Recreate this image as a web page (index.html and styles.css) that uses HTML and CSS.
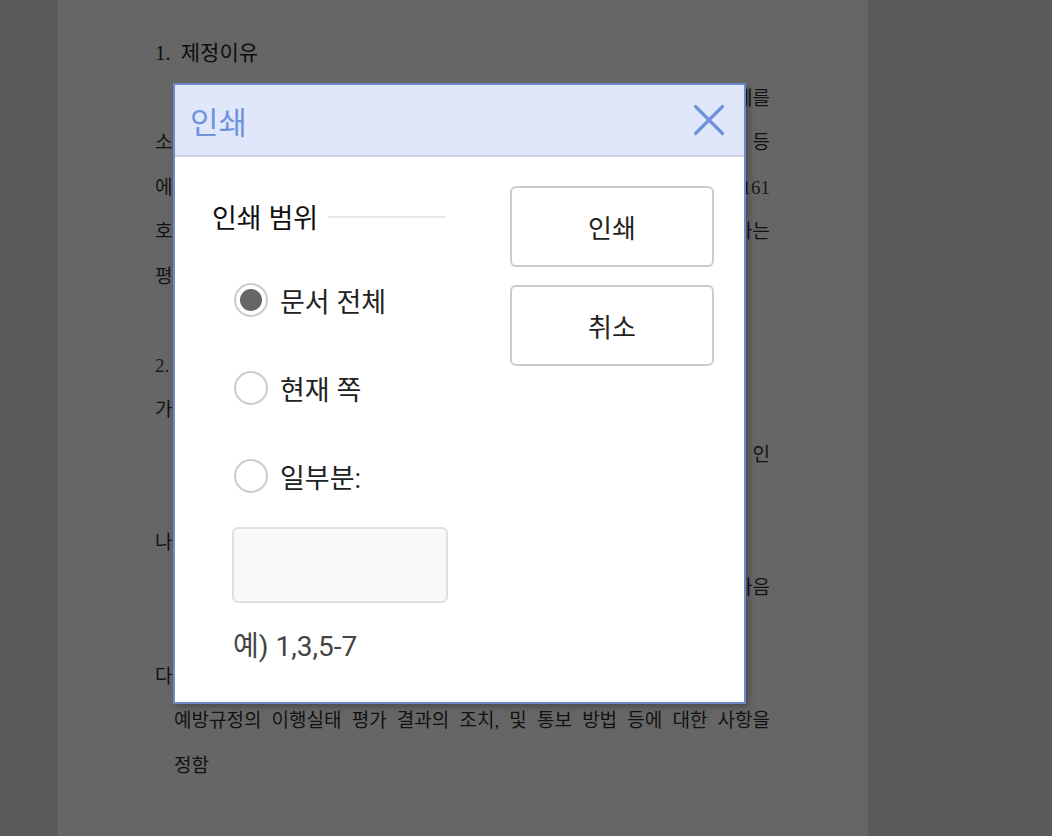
FILE: index.html
```html
<!DOCTYPE html>
<html lang="ko">
<head>
<meta charset="utf-8">
<title>인쇄</title>
<link rel="stylesheet" href="styles.css">
</head>
<body>
<div class="desk">
  <div class="page">
    <div class="heading"><span class="hnum">1.</span>제정이유</div>
    <div class="line"><span></span><span>체를</span></div>
    <div class="line"><span>소</span><span>등</span></div>
    <div class="line"><span>에</span><span class="num">161</span></div>
    <div class="line"><span>호.</span><span>하는</span></div>
    <div class="line"><span>평</span></div>
    <div class="line"></div>
    <div class="line"><span class="num">2.</span></div>
    <div class="line"><span>가</span></div>
    <div class="line"><span></span><span>인</span></div>
    <div class="line"></div>
    <div class="line"><span>나</span></div>
    <div class="line"><span></span><span>다음</span></div>
    <div class="line"></div>
    <div class="line"><span>다</span></div>
    <p class="para">예방규정의 이행실태 평가 결과의 조치, 및 통보 방법 등에 대한 사항을</p>
    <p class="para last">정함</p>
  </div>

  <div class="dialog">
    <div class="dialog-header">
      <span class="dialog-title">인쇄</span>
      <button class="close" aria-label="닫기">
        <svg width="32" height="32" viewBox="0 0 32 32"><path d="M2.5 2.5 L29.5 29.5 M29.5 2.5 L2.5 29.5" stroke="#7092dc" stroke-width="3.2" stroke-linecap="round" fill="none"/></svg>
      </button>
    </div>
    <div class="dialog-body">
      <div class="range">
        <div class="legend"><span>인쇄 범위</span><span class="rule"></span></div>
        <div class="options">
          <label class="radio-row"><span class="radio checked"></span><span>문서 전체</span></label>
          <label class="radio-row"><span class="radio"></span><span>현재 쪽</span></label>
          <label class="radio-row"><span class="radio"></span><span>일부분:</span></label>
        </div>
        <div class="pages-input"></div>
        <div class="example">예) 1,3,5-7</div>
      </div>
      <div class="actions">
        <button class="btn">인쇄</button>
        <button class="btn">취소</button>
      </div>
    </div>
  </div>
</div>
</body>
</html>
```
FILE: styles.css
```css
html, body {
  margin: 0;
  padding: 0;
}
body {
  background: #5a5a5a;
  width: 1052px;
  height: 836px;
  overflow: hidden;
}
.desk {
  position: relative;
  width: 1052px;
  height: 836px;
}
.page {
  margin-left: 58px;
  width: 811px;
  height: 836px;
  box-sizing: border-box;
  background: #666666;
  border-right: 1px solid #565656;
  padding: 32px 98px 0 97px;
  font-family: "Liberation Serif", "Noto Sans CJK KR", serif;
  font-size: 19px;
  color: #121212;
}
.heading {
  height: 42px;
  line-height: 42px;
  margin-bottom: 3px;
  font-size: 21px;
  font-weight: 400;
  color: #0e0e0e;
}
.hnum {
  margin-right: 10px;
}
.line {
  height: 44.45px;
  line-height: 44.45px;
  display: flex;
  justify-content: space-between;
}
.para {
  margin: 0;
  padding-left: 19px;
  height: 44.45px;
  line-height: 44.45px;
  text-align: justify;
  text-align-last: justify;
}
.para.last {
  text-align-last: left;
}
.num {
  font-family: "Liberation Serif", serif;
  color: #1a1a1a;
}

.dialog {
  position: absolute;
  left: 173px;
  top: 83px;
  width: 573px;
  height: 621px;
  box-sizing: border-box;
  border: 2px solid #6f88c8;
  background: #ffffff;
  box-shadow: 3px 3px 6px rgba(0,0,0,0.25);
  font-family: "Roboto", "Noto Sans CJK KR", sans-serif;
  display: flex;
  flex-direction: column;
}
.dialog-header {
  height: 70px;
  background: #e0e7fa;
  border-bottom: 2px solid #ccd2e4;
  display: flex;
  align-items: center;
  justify-content: space-between;
  padding: 0 19px 0 15px;
}
.dialog-title {
  font-size: 31px;
  color: #7092dc;
}
.close {
  border: 0;
  background: transparent;
  padding: 0;
  width: 32px;
  height: 32px;
  display: flex;
}
.dialog-body {
  display: flex;
  padding: 29px 0 0 37px;
  gap: 62px;
}
.range {
  width: 236px;
  display: flex;
  flex-direction: column;
}
.legend {
  height: 60px;
  display: flex;
  align-items: center;
  font-size: 27px;
  color: #111;
  gap: 10px;
}
.rule {
  flex: 1;
  height: 2px;
  background: #e8e8e8;
  margin-top: 1px;
  margin-right: 3px;
}
.options {
  margin-top: 10px;
  display: flex;
  flex-direction: column;
}
.radio-row {
  height: 88px;
  display: flex;
  align-items: center;
  padding-left: 22px;
  gap: 12px;
  font-size: 27px;
  color: #222;
}
.radio {
  width: 34px;
  height: 34px;
  box-sizing: border-box;
  border: 2px solid #cccccc;
  border-radius: 50%;
  display: flex;
  align-items: center;
  justify-content: center;
  background: #fff;
  flex: none;
}
.radio.checked::after {
  content: "";
  width: 22px;
  height: 22px;
  border-radius: 50%;
  background: #666666;
}
.pages-input {
  margin: 7px 0 0 20px;
  width: 216px;
  height: 76px;
  box-sizing: border-box;
  border: 2px solid #e0e0e0;
  border-radius: 6px;
  background: #f9f9f9;
}
.example {
  margin: 24px 0 0 21px;
  height: 40px;
  line-height: 40px;
  font-size: 28px;
  color: #444;
}
.actions {
  display: flex;
  flex-direction: column;
  gap: 18px;
}
.btn {
  width: 204px;
  height: 81px;
  box-sizing: border-box;
  border: 2px solid #cccccc;
  border-radius: 6px;
  background: #fff;
  font-family: "Roboto", "Noto Sans CJK KR", sans-serif;
  font-size: 26px;
  color: #222;
  padding: 0;
}
```
